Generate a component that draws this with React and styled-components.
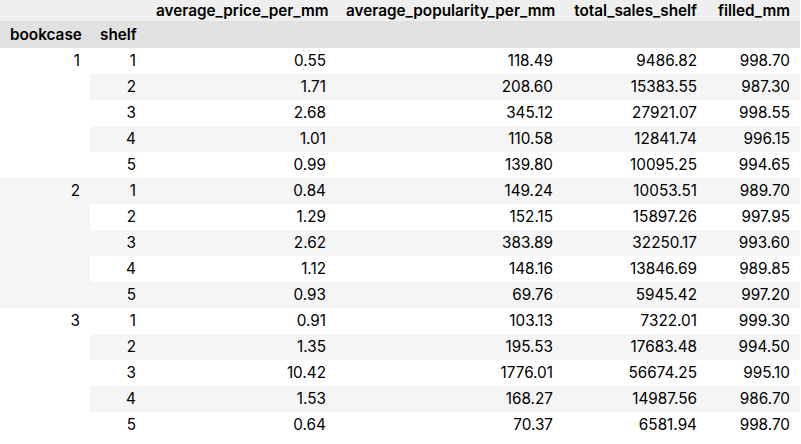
import React from "react";
import styled, { createGlobalStyle } from "styled-components";

const Global = createGlobalStyle`
  html, body { margin: 0; padding: 0; background: #fff; }
  body { font-family: Inter, "Liberation Sans", Arial, sans-serif; color: #000; }
`;

const Table = styled.table`
  border-collapse: collapse;
  border-spacing: 0;
  table-layout: fixed;
  width: 800px;
  font-size: 15.3px;
  font-family: Inter, "Liberation Sans", Arial, sans-serif;
`;

const HeadRow = styled.tr`
  height: ${(p) => p.$h}px;
  background: ${(p) => p.$bg};
`;

const HeadCell = styled.th`
  font-weight: 600;
  text-align: ${(p) => (p.$left ? "left" : "right")};
  padding: 0 10px;
  white-space: nowrap;
  vertical-align: middle;
  line-height: 18px;
  color: #000;
`;

const BodyRow = styled.tr`
  height: 26px;
  background: ${(p) => (p.$striped ? "#f5f5f5" : "#fff")};
`;

const IndexCell = styled.th`
  font-weight: 400;
  text-align: right;
  padding: 0 10px;
  vertical-align: ${(p) => (p.$top ? "top" : "middle")};
  line-height: 26px;
  color: #000;
`;

const Cell = styled.td`
  text-align: right;
  padding: 0 10px;
  white-space: nowrap;
  line-height: 26px;
  color: #000;
`;

const columns = [
  "average_price_per_mm",
  "average_popularity_per_mm",
  "total_sales_shelf",
  "filled_mm",
];

const data = [
  [
    ["0.55", "118.49", "9486.82", "998.70"],
    ["1.71", "208.60", "15383.55", "987.30"],
    ["2.68", "345.12", "27921.07", "998.55"],
    ["1.01", "110.58", "12841.74", "996.15"],
    ["0.99", "139.80", "10095.25", "994.65"],
  ],
  [
    ["0.84", "149.24", "10053.51", "989.70"],
    ["1.29", "152.15", "15897.26", "997.95"],
    ["2.62", "383.89", "32250.17", "993.60"],
    ["1.12", "148.16", "13846.69", "989.85"],
    ["0.93", "69.76", "5945.42", "997.20"],
  ],
  [
    ["0.91", "103.13", "7322.01", "999.30"],
    ["1.35", "195.53", "17683.48", "994.50"],
    ["10.42", "1776.01", "56674.25", "995.10"],
    ["1.53", "168.27", "14987.56", "986.70"],
    ["0.64", "70.37", "6581.94", "998.70"],
  ],
];

const widths = [90, 56, 190, 227, 144, 93];

export default function App() {
  let rowIndex = 0;
  return (
    <>
      <Global />
      <Table>
        <colgroup>
          {widths.map((w, i) => (
            <col key={i} style={{ width: w }} />
          ))}
        </colgroup>
        <thead>
          <HeadRow $h={21} $bg="#efefef">
            <HeadCell />
            <HeadCell />
            {columns.map((c) => (
              <HeadCell key={c}>{c}</HeadCell>
            ))}
          </HeadRow>
          <HeadRow $h={27} $bg="#e1e1e1">
            <HeadCell>bookcase</HeadCell>
            <HeadCell>shelf</HeadCell>
            <HeadCell />
            <HeadCell />
            <HeadCell />
            <HeadCell />
          </HeadRow>
        </thead>
        <tbody>
          {data.map((group, g) =>
            group.map((vals, s) => {
              rowIndex += 1;
              const striped = rowIndex % 2 === 0;
              return (
                <BodyRow key={`${g}-${s}`} $striped={striped}>
                  {s === 0 && (
                    <IndexCell rowSpan={5} $top>
                      {g + 1}
                    </IndexCell>
                  )}
                  <IndexCell>{s + 1}</IndexCell>
                  {vals.map((v, i) => (
                    <Cell key={i}>{v}</Cell>
                  ))}
                </BodyRow>
              );
            })
          )}
        </tbody>
      </Table>
    </>
  );
}
